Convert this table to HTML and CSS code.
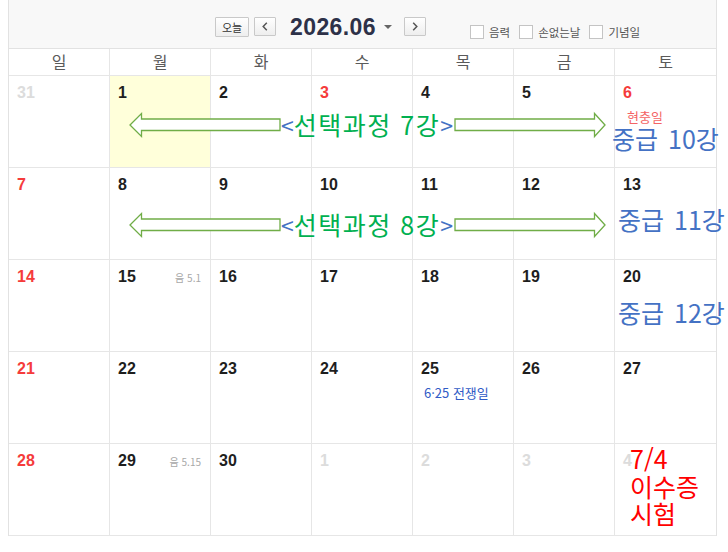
FILE: index.html
```html
<!DOCTYPE html>
<html lang="ko">
<head>
<meta charset="utf-8">
<title>2026.06</title>
<link rel="stylesheet" href="styles.css">
</head>
<body>
<div class="calendar">
  <div class="toolbar">
    <button class="btn today">오늘</button>
    <button class="btn nav" aria-label="이전"><svg width="6" height="9" viewBox="0 0 6 9"><path d="M4.8 0.8 L1.2 4.5 L4.8 8.2" fill="none" stroke="#555" stroke-width="1.5"/></svg></button>
    <div class="title">2026.06<span class="caret"></span></div>
    <button class="btn nav next" aria-label="다음"><svg width="6" height="9" viewBox="0 0 6 9"><path d="M1.2 0.8 L4.8 4.5 L1.2 8.2" fill="none" stroke="#555" stroke-width="1.5"/></svg></button>
    <div class="opts">
      <label class="opt"><span class="box"></span>음력</label>
      <label class="opt"><span class="box"></span>손없는날</label>
      <label class="opt"><span class="box"></span>기념일</label>
    </div>
  </div>
  <div class="grid">
    <div class="dow">일</div><div class="dow">월</div><div class="dow">화</div><div class="dow">수</div><div class="dow">목</div><div class="dow">금</div><div class="dow">토</div>

    <div class="day other"><div class="top"><span class="n">31</span></div></div>
    <div class="day today-cell"><div class="top"><span class="n">1</span></div></div>
    <div class="day"><div class="top"><span class="n">2</span></div></div>
    <div class="day red"><div class="top"><span class="n">3</span></div></div>
    <div class="day"><div class="top"><span class="n">4</span></div></div>
    <div class="day"><div class="top"><span class="n">5</span></div></div>
    <div class="day red"><div class="top"><span class="n">6</span></div><div class="memo holiday">현충일</div></div>

    <div class="day red"><div class="top"><span class="n">7</span></div></div>
    <div class="day"><div class="top"><span class="n">8</span></div></div>
    <div class="day"><div class="top"><span class="n">9</span></div></div>
    <div class="day"><div class="top"><span class="n">10</span></div></div>
    <div class="day"><div class="top"><span class="n">11</span></div></div>
    <div class="day"><div class="top"><span class="n">12</span></div></div>
    <div class="day"><div class="top"><span class="n">13</span></div></div>

    <div class="day red"><div class="top"><span class="n">14</span></div></div>
    <div class="day"><div class="top"><span class="n">15</span><span class="lunar">음 5.1</span></div></div>
    <div class="day"><div class="top"><span class="n">16</span></div></div>
    <div class="day"><div class="top"><span class="n">17</span></div></div>
    <div class="day"><div class="top"><span class="n">18</span></div></div>
    <div class="day"><div class="top"><span class="n">19</span></div></div>
    <div class="day"><div class="top"><span class="n">20</span></div></div>

    <div class="day red"><div class="top"><span class="n">21</span></div></div>
    <div class="day"><div class="top"><span class="n">22</span></div></div>
    <div class="day"><div class="top"><span class="n">23</span></div></div>
    <div class="day"><div class="top"><span class="n">24</span></div></div>
    <div class="day"><div class="top"><span class="n">25</span></div><div class="memo anniv">6·25 전쟁일</div></div>
    <div class="day"><div class="top"><span class="n">26</span></div></div>
    <div class="day"><div class="top"><span class="n">27</span></div></div>

    <div class="day red"><div class="top"><span class="n">28</span></div></div>
    <div class="day"><div class="top"><span class="n">29</span><span class="lunar">음 5.15</span></div></div>
    <div class="day"><div class="top"><span class="n">30</span></div></div>
    <div class="day other"><div class="top"><span class="n">1</span></div></div>
    <div class="day other"><div class="top"><span class="n">2</span></div></div>
    <div class="day other"><div class="top"><span class="n">3</span></div></div>
    <div class="day other"><div class="top"><span class="n">4</span></div></div>
  </div>

  <div class="ann">
    <svg class="arrows" width="728" height="552" viewBox="0 0 728 552">
      <g fill="#fff" stroke="#70ad47" stroke-width="1.3" stroke-linejoin="miter">
        <path d="M130 125 L141.5 113.5 L141.5 119 L280 119 L280 130.5 L141.5 130.5 L141.5 136.5 Z"/>
        <path d="M605 125 L594.5 113.5 L594.5 119 L455 119 L455 130.5 L594.5 130.5 L594.5 136.5 Z"/>
        <path d="M130 225 L141.5 213.5 L141.5 219 L280 219 L280 230.5 L141.5 230.5 L141.5 236.5 Z"/>
        <path d="M605 225 L594.5 213.5 L594.5 219 L455 219 L455 230.5 L594.5 230.5 L594.5 236.5 Z"/>
      </g>
    </svg>
    <div class="note course c7"><span class="br">&lt;</span>선택과정 7강<span class="br">&gt;</span></div>
    <div class="note course c8"><span class="br">&lt;</span>선택과정 8강<span class="br">&gt;</span></div>
    <div class="note mid m10">중급 10강</div>
    <div class="note mid m11">중급 11강</div>
    <div class="note mid m12">중급 12강</div>
    <div class="note exam">7/4<br>이수증<br>시험</div>
  </div>
</div>
</body>
</html>
```

FILE: styles.css
```css
* { box-sizing: border-box; }

html, body {
  margin: 0;
  background: #fff;
}

body {
  padding-left: 8px;
  font-family: "Noto Sans CJK KR", "Liberation Sans", sans-serif;
  color: #222;
}

.calendar {
  position: relative;
  width: 709px;
  border-left: 1px solid #e2e2e2;
  border-right: 1px solid #e2e2e2;
}

/* toolbar */
.toolbar {
  height: 49px;
  background: #f8f8f8;
  border-bottom: 1px solid #e2e2e2;
  display: flex;
  align-items: center;
  padding: 5px 0 0 206px;
}

.btn {
  display: flex;
  align-items: center;
  justify-content: center;
  padding: 0;
  margin: 0;
  border: 1px solid #c9c9c9;
  border-radius: 1px;
  background: linear-gradient(#ffffff, #eeeeee);
  font-family: "Noto Sans CJK KR", sans-serif;
  color: #333;
}

.today {
  width: 34px;
  height: 20px;
  font-size: 11px;
  line-height: 18px;
}

.nav {
  width: 22px;
  height: 19px;
  margin-left: 5px;
}

.nav.next { margin-left: 12px; }

.title {
  margin-left: 14px;
  display: flex;
  align-items: center;
  font-family: "Liberation Sans", sans-serif;
  font-weight: bold;
  font-size: 23px;
  letter-spacing: 0.4px;
  color: #2d3148;
  line-height: 26px;
}

.caret {
  width: 0;
  height: 0;
  margin-left: 8px;
  margin-top: 1px;
  border-left: 4px solid transparent;
  border-right: 4px solid transparent;
  border-top: 4px solid #666;
}

.opts {
  display: flex;
  align-items: center;
  margin-left: 44px;
  margin-top: 10px;
  font-size: 11.5px;
  color: #555;
}

.opt {
  display: flex;
  align-items: center;
  margin-right: 9px;
}

.box {
  width: 14px;
  height: 14px;
  border: 1px solid #c4c4c4;
  background: #fff;
  margin-right: 5px;
}

/* grid */
.grid {
  display: grid;
  grid-template-columns: repeat(7, 1fr);
  grid-template-rows: 27px repeat(5, 92px);
}

.dow,
.day {
  border-right: 1px solid #e6e6e6;
  border-bottom: 1px solid #e6e6e6;
}

.dow:nth-child(7n),
.day:nth-child(7n) { border-right: 0; }

.dow {
  text-align: center;
  font-size: 16px;
  line-height: 25px;
  color: #5a5a5a;
}

.day {
  padding: 8px 9px 0 8px;
}

.top {
  display: flex;
  justify-content: space-between;
  align-items: baseline;
}

.n {
  font-family: "Liberation Sans", sans-serif;
  font-weight: bold;
  font-size: 16px;
  line-height: 18px;
  color: #1e1e1e;
}

.red .n { color: #f53b3b; }
.other .n { color: #dcdcdc; }

.today-cell { background: #ffffda; }

.lunar {
  font-size: 10px;
  color: #a8a8a8;
}

.memo {
  font-size: 13px;
  line-height: 16px;
  margin-top: 7px;
  padding-left: 4px;
}

.holiday { color: #f46464; }
.anniv { color: #2f5bc6; padding-left: 3px; }

/* annotations layered over the calendar */
.ann {
  position: absolute;
  left: -9px;
  top: 0;
  width: 728px;
  height: 552px;
  pointer-events: none;
}

.arrows {
  position: absolute;
  left: 0;
  top: 0;
}

.note {
  position: absolute;
  white-space: nowrap;
  font-size: 25px;
  line-height: 28px;
  word-spacing: 3px;
}

.course { color: #00b050; left: 281px; letter-spacing: 1.5px; word-spacing: 0; }
.course .br { color: #4472c4; font-size: 23px; letter-spacing: 0; }
.c7 { top: 110px; }
.c8 { top: 210px; }

.mid { color: #4472c4; }
.m10 { left: 612px; top: 124px; }
.m11 { left: 618px; top: 205px; }
.m12 { left: 618px; top: 298px; }

.exam {
  color: #ff0000;
  left: 630px;
  top: 445px;
  line-height: 27.5px;
}
```
